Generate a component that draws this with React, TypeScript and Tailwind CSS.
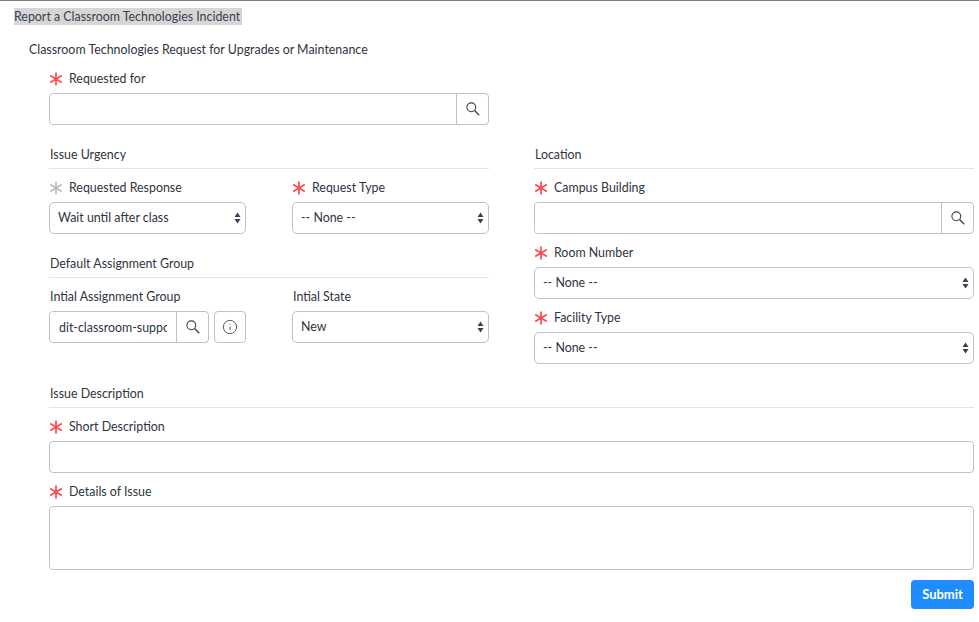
import { Info } from 'lucide-react';

const font = "font-['Lato',sans-serif]";

function Star({ gray }: { gray?: boolean }) {
  return (
    <svg
      viewBox="0 0 14 14"
      className={`mr-[6px] -ml-px h-[14px] w-[14px] ${gray ? 'text-[#b9bcc2]' : 'text-[#fb4a50]'}`}
      fill="none"
      stroke="currentColor"
      strokeWidth="1.7"
    >
      <path d="M7 0.5V13.5M1.2 3.5L12.8 10.5M12.8 3.5L1.2 10.5" />
    </svg>
  );
}

function SearchIcon() {
  return (
    <svg viewBox="0 0 14 14" className="h-[14px] w-[14px] text-[#3d4450]" fill="none" stroke="currentColor" strokeWidth="1.1">
      <circle cx="5.3" cy="5.3" r="4.4" />
      <path d="M8.6 8.6L13.2 13.2" strokeWidth="1.4" />
    </svg>
  );
}

function Label({ text, star, gray }: { text: string; star?: boolean; gray?: boolean }) {
  return (
    <div className="mb-[5px] flex h-5 items-center pl-px pt-[2px] text-[12.4px] text-[#2e3440]">
      {star && <Star gray={gray} />}
      {text}
    </div>
  );
}

function Heading({ text }: { text: string }) {
  return (
    <div className="mb-2 flex h-[30px] items-start border-b border-[#e3e4e6] pl-px pt-[7px] text-[12.4px] text-[#2e3440]">
      {text}
    </div>
  );
}

function Lookup({ value }: { value?: string }) {
  return (
    <div className="flex h-8 min-w-0 flex-1 rounded-[4px] border border-[#bfc1c5] bg-white">
      <input
        readOnly
        value={value ?? ''}
        className="h-full min-w-0 flex-1 rounded-l-[4px] bg-white px-[9px] text-[12.4px] text-[#2e3440] outline-none"
      />
      <div className="flex w-8 shrink-0 items-center justify-center border-l border-[#bfc1c5]">
        <SearchIcon />
      </div>
    </div>
  );
}

function Select({ value }: { value: string }) {
  return (
    <div className="relative h-8 w-full">
      <select className="h-full w-full appearance-none rounded-[5px] border border-[#bfc1c5] bg-white pl-2 pr-6 text-[12.4px] text-[#2e3440] outline-none">
        <option>{value}</option>
      </select>
      <svg viewBox="0 0 7 12" className="absolute right-[5px] top-[10px] h-3 w-[7px] fill-[#3a4150]">
        <path d="M3.5 0.5L6.5 5H0.5ZM3.5 11.5L0.5 7H6.5Z" />
      </svg>
    </div>
  );
}

export default function App() {
  return (
    <div className={`${font} h-[622px] w-[979px] overflow-hidden border-t border-[#7a7a7a] bg-white text-[#2e3440]`}>
      <div className="pl-[14px] pt-[7px]">
        <div className="h-[17px] w-[228px] whitespace-nowrap bg-[#d6d6d6] text-[12.4px] leading-[18px] text-[#3b4150]">
          Report a Classroom Technologies Incident
        </div>
      </div>
      <div className="pl-[29px] pt-[15px] text-[12.4px] leading-5">
        Classroom Technologies Request for Upgrades or Maintenance
      </div>

      <div className="pl-[49px] pr-[5px] pt-2">
        <div className="w-[440px]">
          <Label text="Requested for" star />
          <Lookup />
        </div>

        <div className="mt-[14px] grid grid-cols-2 gap-x-[45px]">
          <div>
            <Heading text="Issue Urgency" />
            <div className="grid grid-cols-2 gap-x-[46px]">
              <div>
                <Label text="Requested Response" star gray />
                <Select value="Wait until after class" />
              </div>
              <div>
                <Label text="Request Type" star />
                <Select value="-- None --" />
              </div>
            </div>
            <div className="mt-[14px]">
              <Heading text="Default Assignment Group" />
            </div>
            <div className="grid grid-cols-2 gap-x-[46px]">
              <div>
                <Label text="Intial Assignment Group" />
                <div className="flex gap-[5px]">
                  <Lookup value="dit-classroom-support" />
                  <div className="flex h-8 w-8 shrink-0 items-center justify-center rounded-[4px] border border-[#bfc1c5]">
                    <Info size={16} strokeWidth={1.3} className="text-[#3d4450]" />
                  </div>
                </div>
              </div>
              <div>
                <Label text="Intial State" />
                <Select value="New" />
              </div>
            </div>
          </div>

          <div className="flex flex-col gap-2">
            <div>
              <Heading text="Location" />
              <Label text="Campus Building" star />
              <Lookup />
            </div>
            <div>
              <Label text="Room Number" star />
              <Select value="-- None --" />
            </div>
            <div>
              <Label text="Facility Type" star />
              <Select value="-- None --" />
            </div>
          </div>
        </div>

        <div className="mt-[14px]">
          <Heading text="Issue Description" />
          <Label text="Short Description" star />
          <input readOnly className="block h-8 w-full rounded-[4px] border border-[#bfc1c5] bg-white outline-none" />
          <div className="mt-2">
            <Label text="Details of Issue" star />
          </div>
          <textarea readOnly className="block h-16 w-full resize-none rounded-[4px] border border-[#bfc1c5] bg-white outline-none" />
          <div className="mt-[10px] flex justify-end">
            <button className="h-[29px] w-[63px] rounded-[4px] bg-[#1f8cff] text-[13px] font-bold text-white">
              Submit
            </button>
          </div>
        </div>
      </div>
    </div>
  );
}
